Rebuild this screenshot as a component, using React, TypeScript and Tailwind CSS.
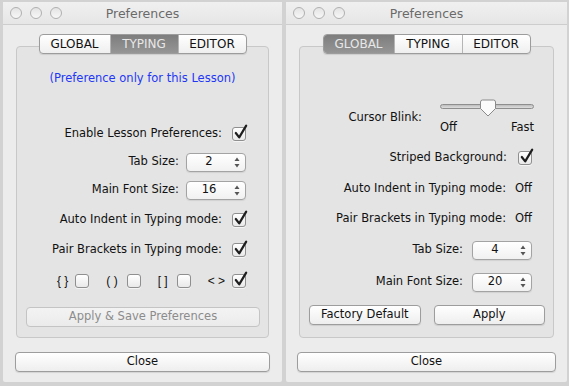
import React from "react";

const font = "font-['DejaVu_Sans',sans-serif]";

function Check({ checked }: { checked?: boolean }) {
  return (
    <span className="relative inline-block h-[14px] w-[14px] shrink-0 rounded-[3px] border border-[#8f8f8f] bg-linear-to-b from-white to-[#e9e9e9] shadow-[0_1px_0_rgba(255,255,255,0.6)]">
      {checked && (
        <svg className="absolute -top-[4px] left-[1px] h-[16px] w-[14px] overflow-visible" viewBox="0 0 14 16">
          <path d="M1.8 9 L5.2 13.4 L12.2 1.6" fill="none" stroke="#1e1e1e" strokeWidth="2.2" strokeLinecap="round" strokeLinejoin="round" />
        </svg>
      )}
    </span>
  );
}

function Spinner({ value }: { value: string }) {
  return (
    <div className="flex h-[19px] w-[60px] shrink-0 items-center rounded-[4px] border border-[#a3a3a3] bg-linear-to-b from-white to-[#f1f1f1] shadow-[0_1px_1px_rgba(0,0,0,0.08)]">
      <span className="w-[44px] text-center leading-none">{value}</span>
      <svg className="ml-[3px] h-[11px] w-[6px]" viewBox="0 0 6 11">
        <path d="M3 0.5 L5.5 4 H0.5 Z" fill="#555" />
        <path d="M3 10.5 L5.5 7 H0.5 Z" fill="#555" />
      </svg>
    </div>
  );
}

function Button({ label, disabled, className }: { label: string; disabled?: boolean; className?: string }) {
  return (
    <div
      className={
        "flex h-[20px] items-center justify-center rounded-[4px] border bg-linear-to-b " +
        (disabled
          ? "border-[#c4c4c4] from-[#f3f3f3] to-[#ebebeb] text-[#8c8c8c] "
          : "border-[#9d9d9d] from-white to-[#eeeeee] text-[#111] shadow-[0_1px_1px_rgba(0,0,0,0.1)] ") +
        (className ?? "")
      }
    >
      {label}
    </div>
  );
}

function Tabs({ active }: { active: number }) {
  const names = ["GLOBAL", "TYPING", "EDITOR"];
  const widths = ["w-[70px]", "w-[68px]", "w-[68px]"];
  return (
    <div className="relative z-10 flex justify-center">
      <div className="flex h-[20px] overflow-hidden rounded-[4px] border border-[#9c9c9c] bg-linear-to-b from-white to-[#efefef] text-[12px] shadow-[0_1px_1px_rgba(0,0,0,0.1)]">
        {names.map((n, i) => (
          <div
            key={n}
            className={
              "flex items-center justify-center " +
              widths[i] +
              (i > 0 ? " border-l border-[#b5b5b5]" : "") +
              (i === active ? " bg-linear-to-b from-[#7e7e7e] to-[#959595] text-[#e8e8e8]" : " text-[#111]")
            }
          >
            {n}
          </div>
        ))}
      </div>
    </div>
  );
}

function TitleBar() {
  return (
    <div className="relative flex h-[23px] shrink-0 items-center border-b border-[#cdcdcd] bg-linear-to-b from-[#f0f0f0] to-[#e6e6e6] pl-[7px]">
      <div className="flex gap-[8px]">
        {[0, 1, 2].map(i => (
          <span key={i} className="h-[12px] w-[12px] rounded-full border border-[#b0b0b0] bg-linear-to-b from-[#e4e4e4] to-[#f7f7f7]" />
        ))}
      </div>
      <div className="absolute inset-x-0 top-[3px] text-center text-[12.5px] text-[#6a6a6a]">Preferences</div>
    </div>
  );
}

function Bracket({ text, gap }: { text: string; gap: string }) {
  return (
    <span className={"flex items-center " + gap}>
      <span className="font-['Liberation_Sans',sans-serif] text-[12px]">{text}</span>
      <Check checked={text === "< >"} />
    </span>
  );
}

function LeftWindow() {
  return (
    <div className="flex h-[380px] w-[279px] flex-col rounded-t-[5px] rounded-b-[2px] bg-[#ececec]">
      <TitleBar />
      <div className="flex flex-col px-[13px] pt-[9px]">
        <Tabs active={1} />
        <div className="-mt-[8px] flex h-[292px] flex-col rounded-[4px] border border-[#c8c8c8] bg-[#e4e4e4]">
          <div className="mt-[21px] h-[20px] text-center leading-[20px] text-[#2237f5]">(Preference only for this Lesson)</div>
          <div className="mt-[32px] flex h-[28px] items-center justify-end gap-[10px] pr-[22px]">
            <span>Enable Lesson Preferences:</span>
            <Check checked />
          </div>
          <div className="flex h-[28px] items-center justify-end gap-[7px] pr-[22px]">
            <span>Tab Size:</span>
            <Spinner value="2" />
          </div>
          <div className="flex h-[28px] items-center justify-end gap-[7px] pr-[22px]">
            <span>Main Font Size:</span>
            <Spinner value="16" />
          </div>
          <div className="mt-[2px] flex h-[28px] items-center justify-end gap-[10px] pr-[22px]">
            <span>Auto Indent in Typing mode:</span>
            <Check checked />
          </div>
          <div className="mt-[2px] flex h-[28px] items-center justify-end gap-[10px] pr-[22px]">
            <span>Pair Brackets in Typing mode:</span>
            <Check checked />
          </div>
          <div className="mt-[3px] flex h-[28px] items-center justify-end gap-[17px] pr-[22px]">
            <Bracket text="{ }" gap="gap-[7px]" />
            <Bracket text="( )" gap="gap-[9px]" />
            <Bracket text="[ ]" gap="gap-[9px]" />
            <Bracket text="< >" gap="gap-[7px]" />
          </div>
          <Button label="Apply & Save Preferences" disabled className="mt-[12px] ml-[9px] mr-[8px]" />
        </div>
        <Button label="Close" className="mt-[14px] -mx-[1px]" />
      </div>
    </div>
  );
}

function RightWindow() {
  return (
    <div className="flex h-[380px] w-[281px] flex-col rounded-t-[5px] rounded-b-[2px] bg-[#ececec]">
      <TitleBar />
      <div className="flex flex-col px-[13px] pt-[9px]">
        <Tabs active={0} />
        <div className="-mt-[8px] flex h-[292px] flex-col rounded-[4px] border border-[#c8c8c8] bg-[#e4e4e4]">
          <div className="mt-[51px] flex h-[36px] items-center justify-end gap-[18px] pr-[19px]">
            <span className="mt-[4px]">Cursor Blink:</span>
            <div className="flex w-[94px] flex-col">
              <div className="relative h-[18px]">
                <div className="mt-[6px] h-[5px] rounded-full border border-[#8e8e8e] bg-linear-to-b from-[#bdbdbd] to-[#dedede]" />
                <svg className="absolute left-[39px] top-[1px] h-[18px] w-[18px]" viewBox="0 0 18 18">
                  <path d="M1.5 3 Q1.5 1 3.5 1 H14.5 Q16.5 1 16.5 3 V9.5 L9 17 L1.5 9.5 Z" fill="#fbfbfb" stroke="#8a8a8a" strokeWidth="1" />
                </svg>
              </div>
              <div className="mt-[3px] flex justify-between leading-[16px]">
                <span>Off</span>
                <span>Fast</span>
              </div>
            </div>
          </div>
          <div className="mt-[10px] flex h-[28px] items-center justify-end gap-[11px] pr-[21px]">
            <span>Striped Background:</span>
            <Check checked />
          </div>
          <div className="mt-[3px] flex h-[28px] items-center justify-end gap-[9px] pr-[21px]">
            <span>Auto Indent in Typing mode:</span>
            <span>Off</span>
          </div>
          <div className="mt-[2px] flex h-[28px] items-center justify-end gap-[9px] pr-[21px]">
            <span>Pair Brackets in Typing mode:</span>
            <span>Off</span>
          </div>
          <div className="mt-[3px] flex h-[28px] items-center justify-end gap-[9px] pr-[21px]">
            <span>Tab Size:</span>
            <Spinner value="4" />
          </div>
          <div className="mt-[4px] flex h-[28px] items-center justify-end gap-[9px] pr-[21px]">
            <span>Main Font Size:</span>
            <Spinner value="20" />
          </div>
          <div className="mt-[9px] flex gap-[13px] pl-[9px] pr-[8px]">
            <Button label="Factory Default" className="flex-1" />
            <Button label="Apply" className="flex-1" />
          </div>
        </div>
        <Button label="Close" className="mt-[14px] -mx-[2px]" />
      </div>
    </div>
  );
}

export default function App() {
  return (
    <div className={"flex h-[386px] w-[569px] gap-[4px] bg-[#d2d2d2] pl-[3px] pt-[2px] text-[11.5px] text-[#111] " + font}>
      <LeftWindow />
      <RightWindow />
    </div>
  );
}
